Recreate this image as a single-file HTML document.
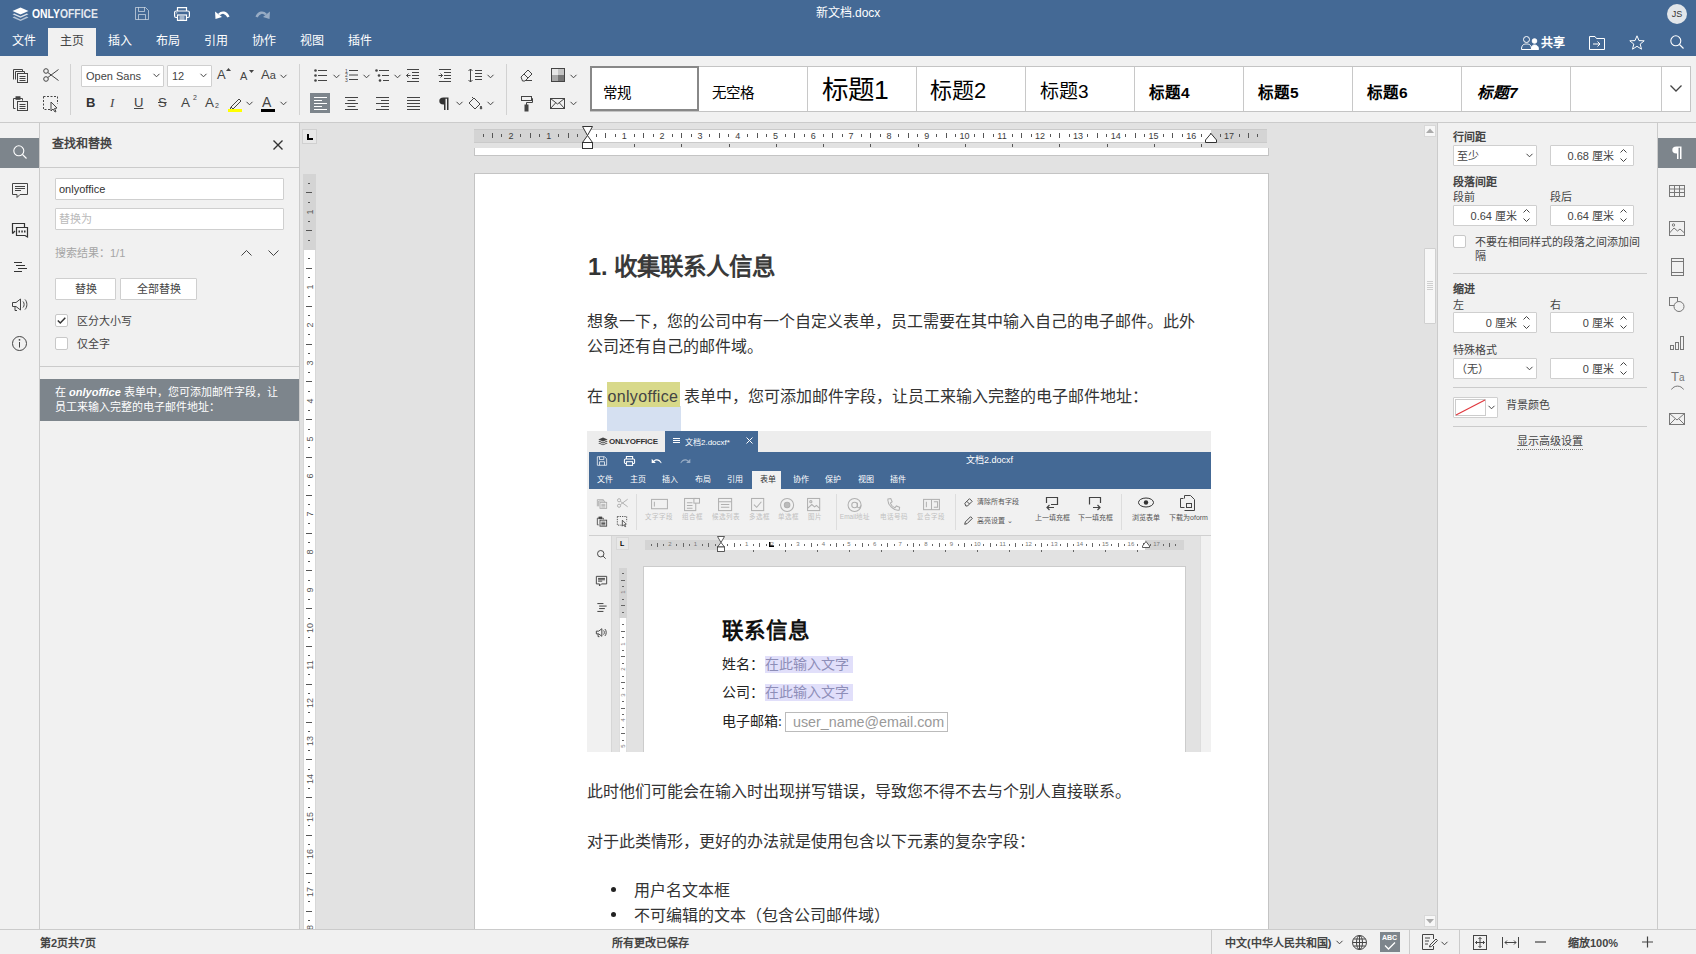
<!DOCTYPE html><html lang="zh-CN"><head><meta charset="utf-8"><style>
*{box-sizing:border-box;margin:0;padding:0}
html,body{width:1696px;height:954px;overflow:hidden}
body{position:relative;background:#f1f1f1;font-family:"Liberation Sans",sans-serif;color:#444;font-size:11px}
.a{position:absolute}
.w{color:#fff}
svg{position:absolute;overflow:visible}
.tab{position:absolute;top:28px;height:28px;width:48px;text-align:center;line-height:27px;font-size:12px;color:#fff}
.inp{position:absolute;background:#fff;border:1px solid #cfcfcf;border-radius:1px}
.btn{position:absolute;background:#fff;border:1px solid #cfcfcf;border-radius:1px;text-align:center;font-size:11px;color:#444}
.cb{position:absolute;width:13px;height:13px;background:#fff;border:1px solid #c8c8c8;border-radius:2px}
.sep{position:absolute;background:#d2d2d2}
.lbl{position:absolute;font-size:11px;color:#444;white-space:nowrap}
.b{font-weight:bold}
.gal{position:absolute;top:66px;height:45px;width:109px;background:#fff;border-right:1px solid #d8d8d8;white-space:nowrap;color:#000}
.doc{position:absolute;font-size:16px;color:#262626;white-space:nowrap;line-height:20px}
</style></head><body>
<div class="a" style="left:0;top:0;width:1696px;height:56px;background:#446995"></div>
<svg style="left:12px;top:7px" width="17" height="15" viewBox="0 0 17 15">
<path d="M8.5 0.5 L16.5 4 L8.5 7.5 L0.5 4 Z" fill="#fff"/>
<path d="M2.2 6.4 L8.5 9.2 L14.8 6.4 L16.5 7.2 L8.5 10.8 L0.5 7.2 Z" fill="#fff" opacity="0.8"/>
<path d="M2.2 9.6 L8.5 12.4 L14.8 9.6 L16.5 10.4 L8.5 14 L0.5 10.4 Z" fill="#fff" opacity="0.6"/>
</svg>
<div class="a w b" style="left:32px;top:6px;font-size:13.5px;letter-spacing:0px;line-height:16px;transform:scaleX(0.77);transform-origin:0 0">ONLY<span style="opacity:.85">OFFICE</span></div>
<svg style="left:135px;top:7px" width="14" height="13" viewBox="0 0 14 13" fill="none" stroke="#fff" stroke-opacity="0.55" stroke-width="1">
<path d="M0.5 0.5 H10.5 L13.5 3.5 V12.5 H0.5 Z"/><path d="M3.5 0.5 V4.5 H9.5 V0.5"/><path d="M3.5 12.5 V7.5 H10.5 V12.5"/></svg>
<svg style="left:174px;top:7px" width="16" height="14" viewBox="0 0 16 14" fill="none" stroke="#fff" stroke-width="1.2">
<path d="M3.5 4 V0.6 H12.5 V4"/><rect x="0.6" y="4" width="14.8" height="6.5" rx="1.5"/><rect x="3.5" y="8" width="9" height="5.4" fill="#446995"/><path d="M5.5 10 H10.5 M5.5 12 H10.5"/><circle cx="2.8" cy="5.8" r="0.6" fill="#fff" stroke="none"/></svg>
<svg style="left:214px;top:8px" width="16" height="12" viewBox="0 0 16 12">
<path d="M5 6.5 C8 3.5 12 4 14.5 9" fill="none" stroke="#fff" stroke-width="2.4"/><path d="M1 3.5 L1.5 11 L8 9 Z" fill="#fff"/></svg>
<svg style="left:255px;top:8px" width="16" height="12" viewBox="0 0 16 12" opacity="0.45">
<path d="M11 6.5 C8 3.5 4 4 1.5 9" fill="none" stroke="#fff" stroke-width="2.4"/><path d="M15 3.5 L14.5 11 L8 9 Z" fill="#fff"/></svg>
<div class="a w" style="left:748px;top:5px;width:200px;text-align:center;font-size:12px;line-height:16px">新文档.docx</div>
<div class="a" style="left:1667px;top:4px;width:20px;height:20px;border-radius:50%;background:#e2e6ea;color:#333;font-size:9px;line-height:20px;text-align:center">JS</div>
<div class="tab" style="left:0px">文件</div>
<div class="tab" style="left:48px;background:#f1f1f1;color:#444">主页</div>
<div class="tab" style="left:96px">插入</div>
<div class="tab" style="left:144px">布局</div>
<div class="tab" style="left:192px">引用</div>
<div class="tab" style="left:240px">协作</div>
<div class="tab" style="left:288px">视图</div>
<div class="tab" style="left:336px">插件</div>
<svg style="left:1521px;top:36px" width="19" height="14" viewBox="0 0 19 14" fill="none" stroke="#fff" stroke-width="1">
<circle cx="5.5" cy="3.5" r="3"/><path d="M0.5 13.5 C0.5 9 2.5 8 5.5 8 C8.5 8 10.5 9 10.5 13.5 Z"/>
<circle cx="13.5" cy="5" r="2.3" fill="#fff"/><path d="M10.5 13.5 C10.5 10 11.5 9 13.5 9 C15.5 9 17.5 10 17.5 13.5 Z" fill="#fff"/></svg>
<div class="a w b" style="left:1541px;top:36px;font-size:12px;line-height:14px">共享</div>
<svg style="left:1589px;top:36px" width="16" height="14" viewBox="0 0 16 14" fill="none" stroke="#fff" stroke-width="1">
<path d="M0.5 0.5 H6 L7.5 2.5 H15.5 V13.5 H0.5 Z"/><path d="M4 8 H11 M8.5 5.5 L11 8 L8.5 10.5"/></svg>
<svg style="left:1629px;top:35px" width="16" height="15" viewBox="0 0 16 15" fill="none" stroke="#fff" stroke-width="1">
<path d="M8 0.8 L10 5.6 L15.2 5.8 L11.2 9.1 L12.5 14.2 L8 11.3 L3.5 14.2 L4.8 9.1 L0.8 5.8 L6 5.6 Z"/></svg>
<svg style="left:1670px;top:35px" width="14" height="14" viewBox="0 0 14 14" fill="none" stroke="#fff" stroke-width="1.1">
<circle cx="5.8" cy="5.8" r="5"/><path d="M9.5 9.5 L13.5 13.5"/></svg>
<div class="a" style="left:0;top:122px;width:1696px;height:1px;background:#cbcbcb"></div>
<svg style="left:13px;top:69px" width="15" height="14" viewBox="0 0 15 14" fill="none" stroke="#444" stroke-width="1"><path d="M0.5 10.5 V0.5 H9.5 V2.5"/><path d="M2.5 10.5 V2.5 H11.5 V4.5"/><rect x="4.5" y="4.5" width="10" height="9"/><path d="M6.5 7.5 H12.5 M6.5 9.5 H12.5 M6.5 11.5 H12.5"/></svg>
<svg style="left:43px;top:68px" width="16" height="14" viewBox="0 0 16 14" fill="none" stroke="#444" stroke-width="1"><circle cx="3" cy="3" r="2.3"/><circle cx="3" cy="11" r="2.3"/><path d="M4.8 4.5 L15.5 12.5 M4.8 9.5 L15.5 1.5"/></svg>
<svg style="left:13px;top:96px" width="15" height="15" viewBox="0 0 15 15" fill="none" stroke="#444" stroke-width="1"><path d="M2.5 12.5 H0.5 V2.5 H9.5 V4.5"/><rect x="3" y="0.8" width="4" height="2.5" fill="#444"/><rect x="4.5" y="5.5" width="10" height="9"/><path d="M6.5 8.5 H12.5 M6.5 10.5 H12.5 M6.5 12.5 H12.5"/></svg>
<svg style="left:43px;top:96px" width="15" height="16" viewBox="0 0 15 16" fill="none" stroke="#444" stroke-width="1"><path d="M0.5 0.5 H14.5 V8 M0.5 0.5 V13.5 H7" stroke-dasharray="2 1.5"/><path d="M8 6 L8 15 L10 13 L12 16 L13 15.5 L11.5 12.5 L14 12 Z" fill="#f1f1f1"/></svg>
<div class="sep" style="left:70px;top:64px;width:1px;height:51px"></div>
<div class="sep" style="left:299px;top:64px;width:1px;height:51px"></div>
<div class="sep" style="left:506px;top:64px;width:1px;height:51px"></div>
<div class="inp" style="left:81px;top:65px;width:83px;height:22px"></div>
<div class="lbl" style="left:86px;top:69px;font-size:11px;line-height:14px">Open Sans</div>
<svg style="left:153px;top:73px" width="7" height="5" viewBox="0 0 7 5" fill="none" stroke="#444" stroke-width="1"><path d="M0.5 0.8 L3.5 3.8 L6.5 0.8"/></svg>
<div class="inp" style="left:167px;top:65px;width:45px;height:22px"></div>
<div class="lbl" style="left:172px;top:69px;font-size:11px;line-height:14px">12</div>
<svg style="left:200px;top:73px" width="7" height="5" viewBox="0 0 7 5" fill="none" stroke="#444" stroke-width="1"><path d="M0.5 0.8 L3.5 3.8 L6.5 0.8"/></svg>
<div class="lbl" style="left:217px;top:67px;font-size:13px;line-height:16px">A</div>
<svg style="left:226px;top:68px" width="5" height="3" viewBox="0 0 5 3" fill="none" stroke="#444" stroke-width="1"><path d="M0 3 L2.5 0 L5 3 Z" fill="#444" stroke="none"/></svg>
<div class="lbl" style="left:240px;top:69px;font-size:11px;line-height:14px">A</div>
<svg style="left:249px;top:70px" width="5" height="3" viewBox="0 0 5 3" fill="none" stroke="#444" stroke-width="1"><path d="M0 0 L2.5 3 L5 0 Z" fill="#444" stroke="none"/></svg>
<div class="lbl" style="left:261px;top:67px;font-size:13px;line-height:16px">A<span style="font-size:11px">a</span></div>
<svg style="left:280px;top:74px" width="7" height="5" viewBox="0 0 7 5" fill="none" stroke="#444" stroke-width="1"><path d="M0.5 0.8 L3.5 3.8 L6.5 0.8"/></svg>
<div class="lbl b" style="left:86px;top:95px;font-size:13px;line-height:16px;color:#333">B</div>
<div class="lbl" style="left:110px;top:95px;font-size:13px;line-height:16px;font-style:italic;font-family:'Liberation Serif',serif">I</div>
<div class="lbl" style="left:134px;top:95px;font-size:13px;line-height:16px;text-decoration:underline">U</div>
<div class="lbl" style="left:158px;top:95px;font-size:13px;line-height:16px;text-decoration:line-through">S</div>
<div class="lbl" style="left:181px;top:95px;font-size:13.5px;line-height:16px">A</div><div class="lbl" style="left:193px;top:94px;font-size:7px;line-height:8px">2</div>
<div class="lbl" style="left:205px;top:95px;font-size:13.5px;line-height:16px">A</div><div class="lbl" style="left:215px;top:102px;font-size:7px;line-height:8px">2</div>
<svg style="left:228px;top:96px" width="15" height="16" viewBox="0 0 15 16" fill="none" stroke="#444" stroke-width="1"><path d="M3 11 L11 3 L13 5 L5 13 Z M3 11 L2 14 L5 13"/><rect x="0" y="13" width="14" height="3" fill="#ffff00" stroke="none"/></svg>
<svg style="left:246px;top:101px" width="7" height="5" viewBox="0 0 7 5" fill="none" stroke="#444" stroke-width="1"><path d="M0.5 0.8 L3.5 3.8 L6.5 0.8"/></svg>
<div class="lbl" style="left:262px;top:94px;font-size:14px;line-height:16px">A</div>
<div class="a" style="left:261px;top:109px;width:14px;height:3px;background:#000"></div>
<svg style="left:280px;top:101px" width="7" height="5" viewBox="0 0 7 5" fill="none" stroke="#444" stroke-width="1"><path d="M0.5 0.8 L3.5 3.8 L6.5 0.8"/></svg>
<svg style="left:314px;top:69px" width="13" height="13" viewBox="0 0 13 13" fill="none" stroke="#444" stroke-width="1"><circle cx="1.5" cy="1.5" r="1.3" fill="#444" stroke="none"/><circle cx="1.5" cy="6.5" r="1.3" fill="#444" stroke="none"/><circle cx="1.5" cy="11.5" r="1.3" fill="#444" stroke="none"/><path d="M4 1.5 H13 M4 6.5 H13 M4 11.5 H13"/></svg>
<svg style="left:333px;top:74px" width="7" height="5" viewBox="0 0 7 5" fill="none" stroke="#444" stroke-width="1"><path d="M0.5 0.8 L3.5 3.8 L6.5 0.8"/></svg>
<svg style="left:345px;top:68px" width="13" height="14" viewBox="0 0 13 14" fill="none" stroke="#444" stroke-width="1"><text x="0" y="4.5" font-size="5" fill="#444" stroke="none" font-family="Liberation Sans">1</text><text x="0" y="9" font-size="5" fill="#444" stroke="none" font-family="Liberation Sans">2</text><text x="0" y="13.5" font-size="5" fill="#444" stroke="none" font-family="Liberation Sans">3</text><path d="M4 2.5 H13 M4 7 H13 M4 11.5 H13"/></svg>
<svg style="left:363px;top:74px" width="7" height="5" viewBox="0 0 7 5" fill="none" stroke="#444" stroke-width="1"><path d="M0.5 0.8 L3.5 3.8 L6.5 0.8"/></svg>
<svg style="left:375px;top:69px" width="14" height="13" viewBox="0 0 14 13" fill="none" stroke="#444" stroke-width="1"><circle cx="1.5" cy="1.5" r="1.3" fill="#444" stroke="none"/><circle cx="4" cy="6.5" r="1.3" fill="#444" stroke="none"/><circle cx="5" cy="11.5" r="1.3" fill="#444" stroke="none"/><path d="M4 1.5 H14 M7 6.5 H14 M8 11.5 H14"/></svg>
<svg style="left:394px;top:74px" width="7" height="5" viewBox="0 0 7 5" fill="none" stroke="#444" stroke-width="1"><path d="M0.5 0.8 L3.5 3.8 L6.5 0.8"/></svg>
<svg style="left:406px;top:69px" width="14" height="13" viewBox="0 0 14 13" fill="none" stroke="#444" stroke-width="1"><path d="M1 0.5 H13 M6 3.5 H13 M6 6.5 H13 M6 9.5 H13 M1 12.5 H13"/><path d="M4.5 6.5 H0.5 M2.5 4.5 L0.5 6.5 L2.5 8.5"/></svg>
<svg style="left:438px;top:69px" width="14" height="13" viewBox="0 0 14 13" fill="none" stroke="#444" stroke-width="1"><path d="M1 0.5 H13 M6 3.5 H13 M6 6.5 H13 M6 9.5 H13 M1 12.5 H13"/><path d="M0.5 6.5 H4.5 M2.5 4.5 L4.5 6.5 L2.5 8.5"/></svg>
<svg style="left:468px;top:68px" width="15" height="15" viewBox="0 0 15 15" fill="none" stroke="#444" stroke-width="1"><path d="M2.5 1 V14 M0.5 3 L2.5 1 L4.5 3 M0.5 12 L2.5 14 L4.5 12"/><path d="M7 2.5 H14 M7 5.5 H14 M7 8.5 H14 M7 11.5 H14"/></svg>
<svg style="left:487px;top:74px" width="7" height="5" viewBox="0 0 7 5" fill="none" stroke="#444" stroke-width="1"><path d="M0.5 0.8 L3.5 3.8 L6.5 0.8"/></svg>
<div class="a" style="left:310px;top:93px;width:20px;height:20px;background:#7d858c"></div>
<svg style="left:314px;top:97px" width="13" height="13" viewBox="0 0 13 13" fill="none" stroke="#fff" stroke-width="1"><path d="M0 0.5 H13 M0 3.5 H8 M0 6.5 H13 M0 9.5 H8 M0 12.5 H13"/></svg>
<svg style="left:345px;top:97px" width="13" height="13" viewBox="0 0 13 13" fill="none" stroke="#444" stroke-width="1"><path d="M0 0.5 H13 M2.5 3.5 H10.5 M0 6.5 H13 M2.5 9.5 H10.5 M0 12.5 H13"/></svg>
<svg style="left:376px;top:97px" width="13" height="13" viewBox="0 0 13 13" fill="none" stroke="#444" stroke-width="1"><path d="M0 0.5 H13 M5 3.5 H13 M0 6.5 H13 M5 9.5 H13 M0 12.5 H13"/></svg>
<svg style="left:407px;top:97px" width="13" height="13" viewBox="0 0 13 13" fill="none" stroke="#444" stroke-width="1"><path d="M0 0.5 H13 M0 3.5 H13 M0 6.5 H13 M0 9.5 H13 M0 12.5 H13"/></svg>
<svg style="left:439px;top:97px" width="10" height="13" viewBox="0 0 10 13" fill="none" stroke="#444" stroke-width="1"><path d="M4.5 0.5 H9.5 V13 H8 V1.8 H6.5 V13 H5 V7.5 H4.5 C1.5 7.5 0.3 6 0.3 4 C0.3 2 1.5 0.5 4.5 0.5 Z" fill="#333" stroke="none"/></svg>
<svg style="left:456px;top:101px" width="7" height="5" viewBox="0 0 7 5" fill="none" stroke="#444" stroke-width="1"><path d="M0.5 0.8 L3.5 3.8 L6.5 0.8"/></svg>
<svg style="left:468px;top:96px" width="15" height="15" viewBox="0 0 15 15" fill="none" stroke="#444" stroke-width="1"><path d="M1 7 L6 2 L12 8 L7 13 Z"/><path d="M4 1 L6 3"/><path d="M13 10 C12 12 12 13 13 13 C14 13 14 12 13 10Z" fill="#444"/></svg>
<svg style="left:487px;top:101px" width="7" height="5" viewBox="0 0 7 5" fill="none" stroke="#444" stroke-width="1"><path d="M0.5 0.8 L3.5 3.8 L6.5 0.8"/></svg>
<svg style="left:520px;top:69px" width="13" height="12" viewBox="0 0 13 12" fill="none" stroke="#444" stroke-width="1"><path d="M1 8 L8 1 L12 5 L5 12 H2.5 Z M4 5 L8 9"/><path d="M5 11.5 H12"/></svg>
<svg style="left:551px;top:68px" width="14" height="14" viewBox="0 0 14 14" fill="none" stroke="#444" stroke-width="1"><rect x="1" y="1" width="6" height="6" fill="#e6e6e6" stroke="none"/><rect x="7" y="1" width="6" height="6" fill="#c4c4c4" stroke="none"/><rect x="1" y="7" width="6" height="6" fill="#a8a8a8" stroke="none"/><rect x="7" y="7" width="6" height="6" fill="#767676" stroke="none"/><rect x="0.5" y="0.5" width="13" height="13"/></svg>
<svg style="left:570px;top:74px" width="7" height="5" viewBox="0 0 7 5" fill="none" stroke="#444" stroke-width="1"><path d="M0.5 0.8 L3.5 3.8 L6.5 0.8"/></svg>
<svg style="left:520px;top:96px" width="13" height="15" viewBox="0 0 13 15" fill="none" stroke="#444" stroke-width="1"><rect x="1.5" y="0.5" width="10" height="4"/><path d="M11.5 2.5 H12.5 V6.5 H6.5 V9"/><rect x="5" y="9" width="3" height="6" fill="#444"/></svg>
<svg style="left:550px;top:98px" width="15" height="11" viewBox="0 0 15 11" fill="none" stroke="#444" stroke-width="1"><rect x="0.5" y="0.5" width="14" height="10"/><path d="M0.5 0.5 L7.5 6 L14.5 0.5 M0.5 10.5 L5.5 5 M14.5 10.5 L9.5 5"/></svg>
<svg style="left:570px;top:101px" width="7" height="5" viewBox="0 0 7 5" fill="none" stroke="#444" stroke-width="1"><path d="M0.5 0.8 L3.5 3.8 L6.5 0.8"/></svg>
<div class="a" style="left:590px;top:66px;width:1101px;height:46px;background:#fff;border:1px solid #c4c4c4"></div>
<div class="a" style="left:698px;top:67px;width:1px;height:44px;background:#c8c8c8"></div>
<div class="a" style="left:603px;top:67px;height:43px;line-height:52px;color:#000;white-space:nowrap;font-size:14.5px;">常规</div>
<div class="a" style="left:807px;top:67px;width:1px;height:44px;background:#c8c8c8"></div>
<div class="a" style="left:712px;top:67px;height:43px;line-height:52px;color:#000;white-space:nowrap;font-size:14.5px;">无空格</div>
<div class="a" style="left:916px;top:67px;width:1px;height:44px;background:#c8c8c8"></div>
<div class="a" style="left:822px;top:67px;height:43px;line-height:52px;color:#000;white-space:nowrap;font-size:26.5px;line-height:46px;">标题1</div>
<div class="a" style="left:1025px;top:67px;width:1px;height:44px;background:#c8c8c8"></div>
<div class="a" style="left:930px;top:67px;height:43px;line-height:52px;color:#000;white-space:nowrap;font-size:22px;line-height:48px;">标题2</div>
<div class="a" style="left:1134px;top:67px;width:1px;height:44px;background:#c8c8c8"></div>
<div class="a" style="left:1040px;top:67px;height:43px;line-height:52px;color:#000;white-space:nowrap;font-size:19px;line-height:49px;">标题3</div>
<div class="a" style="left:1243px;top:67px;width:1px;height:44px;background:#c8c8c8"></div>
<div class="a" style="left:1149px;top:67px;height:43px;line-height:52px;color:#000;white-space:nowrap;font-size:15.5px;font-weight:bold;">标题4</div>
<div class="a" style="left:1352px;top:67px;width:1px;height:44px;background:#c8c8c8"></div>
<div class="a" style="left:1258px;top:67px;height:43px;line-height:52px;color:#000;white-space:nowrap;font-size:15.5px;font-weight:bold;">标题5</div>
<div class="a" style="left:1461px;top:67px;width:1px;height:44px;background:#c8c8c8"></div>
<div class="a" style="left:1367px;top:67px;height:43px;line-height:52px;color:#000;white-space:nowrap;font-size:15.5px;font-weight:bold;">标题6</div>
<div class="a" style="left:1570px;top:67px;width:1px;height:44px;background:#c8c8c8"></div>
<div class="a" style="left:1477px;top:67px;height:43px;line-height:52px;color:#000;white-space:nowrap;font-size:15.5px;font-weight:bold;font-style:italic;">标题7</div>
<div class="a" style="left:1661px;top:67px;width:1px;height:44px;background:#c8c8c8"></div>
<div class="a" style="left:590px;top:66px;width:109px;height:45px;border:2px solid #888"></div>
<svg style="left:1670px;top:85px" width="12" height="7" viewBox="0 0 12 7" fill="none" stroke="#444" stroke-width="1.3"><path d="M0.5 0.5 L6 6 L11.5 0.5"/></svg>
<div class="a" style="left:39px;top:123px;width:1px;height:806px;background:#cbcbcb"></div>
<div class="a" style="left:0;top:138px;width:39px;height:30px;background:#7d858c"></div>
<svg style="left:13px;top:145px" width="14" height="14" viewBox="0 0 14 14" fill="none" stroke="#fff" stroke-width="1.1"><circle cx="5.8" cy="5.8" r="5"/><path d="M9.5 9.5 L13.5 13.5"/></svg>
<svg style="left:12px;top:183px" width="16" height="16" viewBox="0 0 16 16" fill="none" stroke="#444" stroke-width="1"><path d="M0.5 0.5 H15.5 V11.5 H8 L5 14.5 V11.5 H0.5 Z"/><path d="M3 3.5 H13 M3 5.5 H13 M3 7.5 H9"/></svg>
<svg style="left:12px;top:223px" width="17" height="15" viewBox="0 0 17 15" fill="none" stroke="#333" stroke-width="1.2"><path d="M0.5 10.5 V0.5 H12.5 V4"/><path d="M0.5 10.5 L3 8"/><path d="M4.5 4.5 H15.5 V14 L13 12.5 H4.5 Z"/><path d="M6.5 8.5 H8 M9.3 8.5 H10.8 M12 8.5 H13.5" stroke-width="2"/></svg>
<svg style="left:13px;top:261px" width="15" height="12" viewBox="0 0 15 12" fill="none" stroke="#333" stroke-width="1.1"><path d="M1 1.5 H9 M3 4.5 H12 M5 7.5 H14 M1 10.5 H9"/></svg>
<svg style="left:12px;top:298px" width="16" height="13" viewBox="0 0 16 13" fill="none" stroke="#444" stroke-width="1"><path d="M0.5 4.5 H4 L8.5 1 V12 L4 8.5 H0.5 Z"/><path d="M3 8.5 V12.5 H5"/><path d="M11 3.5 C12.5 5 12.5 8 11 9.5 M13 1.5 C15.5 4 15.5 9 13 11.5"/></svg>
<svg style="left:12px;top:336px" width="15" height="15" viewBox="0 0 15 15" fill="none" stroke="#444" stroke-width="1"><circle cx="7.5" cy="7.5" r="7"/><path d="M7.5 6 V11.5"/><circle cx="7.5" cy="3.8" r="0.9" fill="#444" stroke="none"/></svg>
<div class="a" style="left:299px;top:123px;width:1px;height:806px;background:#cbcbcb"></div>
<div class="a" style="left:40px;top:167px;width:259px;height:1px;background:#cbcbcb"></div>
<div class="lbl b" style="left:52px;top:137px;font-size:12px;line-height:15px;color:#444">查找和替换</div>
<svg style="left:273px;top:140px" width="10" height="10" viewBox="0 0 10 10" fill="none" stroke="#333" stroke-width="1.4"><path d="M0.5 0.5 L9.5 9.5 M9.5 0.5 L0.5 9.5"/></svg>
<div class="inp" style="left:55px;top:178px;width:229px;height:22px"></div>
<div class="lbl" style="left:59px;top:182px;font-size:11px;line-height:14px;color:#333">onlyoffice</div>
<div class="inp" style="left:55px;top:208px;width:229px;height:22px"></div>
<div class="lbl" style="left:59px;top:212px;font-size:11px;line-height:14px;color:#b9b9b9">替换为</div>
<div class="lbl" style="left:55px;top:246px;font-size:11px;line-height:14px;color:#a5a5a5">搜索结果：1/1</div>
<svg style="left:241px;top:250px" width="11" height="6" viewBox="0 0 11 6" fill="none" stroke="#444" stroke-width="1"><path d="M0.5 5.5 L5.5 0.5 L10.5 5.5"/></svg>
<svg style="left:268px;top:250px" width="11" height="6" viewBox="0 0 11 6" fill="none" stroke="#444" stroke-width="1"><path d="M0.5 0.5 L5.5 5.5 L10.5 0.5"/></svg>
<div class="btn" style="left:55px;top:278px;width:61px;height:22px;line-height:20px">替换</div>
<div class="btn" style="left:120px;top:278px;width:77px;height:22px;line-height:20px">全部替换</div>
<div class="cb" style="left:55px;top:314px"></div>
<svg style="left:57px;top:317px" width="9" height="7" viewBox="0 0 9 7" fill="none" stroke="#333" stroke-width="1.5"><path d="M0.8 3.5 L3.3 6 L8.3 0.8"/></svg>
<div class="lbl" style="left:77px;top:314px;font-size:11px;line-height:14px">区分大小写</div>
<div class="cb" style="left:55px;top:337px"></div>
<div class="lbl" style="left:77px;top:337px;font-size:11px;line-height:14px">仅全字</div>
<div class="a" style="left:40px;top:366px;width:259px;height:1px;background:#cbcbcb"></div>
<div class="a" style="left:40px;top:379px;width:259px;height:42px;background:#7d858c"></div>
<div class="lbl" style="left:55px;top:385px;font-size:11px;line-height:15px;color:#fff;white-space:normal;width:235px">在 <b><i>onlyoffice</i></b> 表单中，您可添加邮件字段，让<br>员工来输入完整的电子邮件地址：</div>
<div class="a" style="left:0;top:929px;width:1696px;height:1px;background:#cbcbcb"></div>
<div class="lbl b" style="left:40px;top:936px;font-size:11px;line-height:14px">第2页共7页</div>
<div class="lbl b" style="left:612px;top:936px;font-size:11px;line-height:14px">所有更改已保存</div>
<div class="sep" style="left:1211px;top:930px;width:1px;height:24px;background:#cbcbcb"></div>
<div class="lbl b" style="left:1225px;top:936px;font-size:11px;line-height:14px">中文(中华人民共和国)</div>
<svg style="left:1336px;top:940px" width="7" height="5" viewBox="0 0 7 5" fill="none" stroke="#444" stroke-width="1"><path d="M0.5 0.8 L3.5 3.8 L6.5 0.8"/></svg>
<svg style="left:1352px;top:935px" width="15" height="15" viewBox="0 0 15 15" fill="none" stroke="#444" stroke-width="1"><circle cx="7.5" cy="7.5" r="7"/><ellipse cx="7.5" cy="7.5" rx="3" ry="7"/><path d="M0.5 7.5 H14.5 M1.5 4 H13.5 M1.5 11 H13.5 M7.5 0.5 V14.5"/></svg>
<div class="a" style="left:1380px;top:932px;width:20px;height:20px;background:#7d858c"></div>
<div class="a b" style="left:1382px;top:934px;font-size:7px;line-height:8px;color:#fff">ABC</div>
<svg style="left:1384px;top:942px" width="12" height="8" viewBox="0 0 12 8" fill="none" stroke="#fff" stroke-width="1.3"><path d="M1 3.5 L4.5 7 L11 0.5"/></svg>
<div class="sep" style="left:1409px;top:930px;width:1px;height:24px;background:#cbcbcb"></div>
<svg style="left:1422px;top:934px" width="16" height="16" viewBox="0 0 16 16" fill="none" stroke="#444" stroke-width="1"><path d="M11.5 5 V0.5 H0.5 V15.5 H11.5 V12"/><path d="M3 4 H8 M3 7 H7 M3 10 H6"/><path d="M8 11 L14 5 L15.5 6.5 L9.5 12.5 L7.5 13 Z"/></svg>
<svg style="left:1441px;top:941px" width="7" height="5" viewBox="0 0 7 5" fill="none" stroke="#444" stroke-width="1"><path d="M0.5 0.8 L3.5 3.8 L6.5 0.8"/></svg>
<div class="sep" style="left:1459px;top:930px;width:1px;height:24px;background:#cbcbcb"></div>
<svg style="left:1473px;top:935px" width="14" height="15" viewBox="0 0 14 15" fill="none" stroke="#444" stroke-width="1"><rect x="0.5" y="0.5" width="13" height="14"/><path d="M7 2.5 V12.5 M2.5 7.5 H11.5 M5.5 4 L7 2.5 L8.5 4 M5.5 11 L7 12.5 L8.5 11 M4 6 L2.5 7.5 L4 9 M10 6 L11.5 7.5 L10 9"/></svg>
<svg style="left:1502px;top:937px" width="17" height="11" viewBox="0 0 17 11" fill="none" stroke="#444" stroke-width="1"><path d="M0.5 0 V11 M16.5 0 V11 M3 5.5 H14 M5 3.5 L3 5.5 L5 7.5 M12 3.5 L14 5.5 L12 7.5"/></svg>
<svg style="left:1535px;top:941px" width="11" height="2" viewBox="0 0 11 2" fill="none" stroke="#444" stroke-width="1.2"><path d="M0 1 H11"/></svg>
<div class="lbl b" style="left:1568px;top:936px;font-size:11px;line-height:14px">缩放100%</div>
<svg style="left:1642px;top:935px" width="11" height="14" viewBox="0 0 11 14" fill="none" stroke="#444" stroke-width="1.2"><path d="M0 7 H11 M5.5 1.5 V12.5"/></svg>
<div class="a" style="left:1437px;top:123px;width:1px;height:806px;background:#cbcbcb"></div>
<div class="a" style="left:1657px;top:123px;width:1px;height:806px;background:#cbcbcb"></div>
<div class="lbl b" style="left:1453px;top:130px;font-size:11px;line-height:14px">行间距</div>
<div class="inp" style="left:1453px;top:145px;width:84px;height:21px"></div>
<div class="lbl" style="left:1457px;top:149px;font-size:11px;line-height:14px;color:#444">至少</div>
<svg style="left:1526px;top:153px" width="7" height="5" viewBox="0 0 7 5" fill="none" stroke="#444" stroke-width="1"><path d="M0.5 0.8 L3.5 3.8 L6.5 0.8"/></svg>
<div class="inp" style="left:1550px;top:145px;width:84px;height:21px"></div>
<div class="lbl" style="left:1550px;top:149px;width:64px;text-align:right;font-size:11px;line-height:14px;color:#444">0.68 厘米</div>
<svg style="left:1620px;top:149px" width="7" height="4" viewBox="0 0 7 4" fill="none" stroke="#444" stroke-width="1"><path d="M0.5 3.5 L3.5 0.5 L6.5 3.5"/></svg>
<svg style="left:1620px;top:158px" width="7" height="4" viewBox="0 0 7 4" fill="none" stroke="#444" stroke-width="1"><path d="M0.5 0.5 L3.5 3.5 L6.5 0.5"/></svg>
<div class="lbl b" style="left:1453px;top:175px;font-size:11px;line-height:14px">段落间距</div>
<div class="lbl" style="left:1453px;top:190px;font-size:11px;line-height:14px">段前</div>
<div class="lbl" style="left:1550px;top:190px;font-size:11px;line-height:14px">段后</div>
<div class="inp" style="left:1453px;top:205px;width:84px;height:21px"></div>
<div class="lbl" style="left:1453px;top:209px;width:64px;text-align:right;font-size:11px;line-height:14px;color:#444">0.64 厘米</div>
<svg style="left:1523px;top:209px" width="7" height="4" viewBox="0 0 7 4" fill="none" stroke="#444" stroke-width="1"><path d="M0.5 3.5 L3.5 0.5 L6.5 3.5"/></svg>
<svg style="left:1523px;top:218px" width="7" height="4" viewBox="0 0 7 4" fill="none" stroke="#444" stroke-width="1"><path d="M0.5 0.5 L3.5 3.5 L6.5 0.5"/></svg>
<div class="inp" style="left:1550px;top:205px;width:84px;height:21px"></div>
<div class="lbl" style="left:1550px;top:209px;width:64px;text-align:right;font-size:11px;line-height:14px;color:#444">0.64 厘米</div>
<svg style="left:1620px;top:209px" width="7" height="4" viewBox="0 0 7 4" fill="none" stroke="#444" stroke-width="1"><path d="M0.5 3.5 L3.5 0.5 L6.5 3.5"/></svg>
<svg style="left:1620px;top:218px" width="7" height="4" viewBox="0 0 7 4" fill="none" stroke="#444" stroke-width="1"><path d="M0.5 0.5 L3.5 3.5 L6.5 0.5"/></svg>
<div class="cb" style="left:1453px;top:235px"></div>
<div class="lbl" style="left:1475px;top:235px;font-size:11px;line-height:14px;white-space:normal;width:175px">不要在相同样式的段落之间添加间<br>隔</div>
<div class="a" style="left:1453px;top:273px;width:194px;height:1px;background:#cbcbcb"></div>
<div class="lbl b" style="left:1453px;top:282px;font-size:11px;line-height:14px">缩进</div>
<div class="lbl" style="left:1453px;top:298px;font-size:11px;line-height:14px">左</div>
<div class="lbl" style="left:1550px;top:298px;font-size:11px;line-height:14px">右</div>
<div class="inp" style="left:1453px;top:312px;width:84px;height:21px"></div>
<div class="lbl" style="left:1453px;top:316px;width:64px;text-align:right;font-size:11px;line-height:14px;color:#444">0 厘米</div>
<svg style="left:1523px;top:316px" width="7" height="4" viewBox="0 0 7 4" fill="none" stroke="#444" stroke-width="1"><path d="M0.5 3.5 L3.5 0.5 L6.5 3.5"/></svg>
<svg style="left:1523px;top:325px" width="7" height="4" viewBox="0 0 7 4" fill="none" stroke="#444" stroke-width="1"><path d="M0.5 0.5 L3.5 3.5 L6.5 0.5"/></svg>
<div class="inp" style="left:1550px;top:312px;width:84px;height:21px"></div>
<div class="lbl" style="left:1550px;top:316px;width:64px;text-align:right;font-size:11px;line-height:14px;color:#444">0 厘米</div>
<svg style="left:1620px;top:316px" width="7" height="4" viewBox="0 0 7 4" fill="none" stroke="#444" stroke-width="1"><path d="M0.5 3.5 L3.5 0.5 L6.5 3.5"/></svg>
<svg style="left:1620px;top:325px" width="7" height="4" viewBox="0 0 7 4" fill="none" stroke="#444" stroke-width="1"><path d="M0.5 0.5 L3.5 3.5 L6.5 0.5"/></svg>
<div class="lbl" style="left:1453px;top:343px;font-size:11px;line-height:14px">特殊格式</div>
<div class="inp" style="left:1453px;top:358px;width:84px;height:21px"></div>
<div class="lbl" style="left:1456px;top:362px;font-size:11px;line-height:14px;color:#444">（无）</div>
<svg style="left:1526px;top:366px" width="7" height="5" viewBox="0 0 7 5" fill="none" stroke="#444" stroke-width="1"><path d="M0.5 0.8 L3.5 3.8 L6.5 0.8"/></svg>
<div class="inp" style="left:1550px;top:358px;width:84px;height:21px"></div>
<div class="lbl" style="left:1550px;top:362px;width:64px;text-align:right;font-size:11px;line-height:14px;color:#444">0 厘米</div>
<svg style="left:1620px;top:362px" width="7" height="4" viewBox="0 0 7 4" fill="none" stroke="#444" stroke-width="1"><path d="M0.5 3.5 L3.5 0.5 L6.5 3.5"/></svg>
<svg style="left:1620px;top:371px" width="7" height="4" viewBox="0 0 7 4" fill="none" stroke="#444" stroke-width="1"><path d="M0.5 0.5 L3.5 3.5 L6.5 0.5"/></svg>
<div class="a" style="left:1453px;top:387px;width:194px;height:1px;background:#cbcbcb"></div>
<div class="inp" style="left:1453px;top:397px;width:45px;height:21px"></div>
<svg style="left:1455px;top:399px" width="31" height="17" viewBox="0 0 31 17" fill="none"><rect x="0.5" y="0.5" width="30" height="16" fill="#fff" stroke="#ccc"/><path d="M1 16 L30 1" stroke="#e0383e" stroke-width="1.2"/></svg>
<svg style="left:1488px;top:405px" width="7" height="5" viewBox="0 0 7 5" fill="none" stroke="#444" stroke-width="1"><path d="M0.5 0.8 L3.5 3.8 L6.5 0.8"/></svg>
<div class="lbl" style="left:1506px;top:398px;font-size:11px;line-height:14px">背景颜色</div>
<div class="a" style="left:1453px;top:426px;width:194px;height:1px;background:#cbcbcb"></div>
<div class="lbl" style="left:1517px;top:434px;font-size:11px;line-height:14px;border-bottom:1px dotted #777;line-height:15px">显示高级设置</div>
<div class="a" style="left:1658px;top:138px;width:38px;height:30px;background:#7d858c"></div>
<svg style="left:1672px;top:146px" width="10" height="13" viewBox="0 0 10 13" fill="none" stroke="#444" stroke-width="1"><path d="M4.5 0.5 H9.5 V13 H8 V1.8 H6.5 V13 H5 V7.5 H4.5 C1.5 7.5 0.3 6 0.3 4 C0.3 2 1.5 0.5 4.5 0.5 Z" fill="#fff" stroke="none"/></svg>
<svg style="left:1669px;top:185px" width="16" height="12" viewBox="0 0 16 12" fill="none" stroke="#777" stroke-width="1"><rect x="0.5" y="0.5" width="15" height="11"/><path d="M0.5 4 H15.5 M0.5 7.5 H15.5 M5.5 0.5 V11.5 M10.5 0.5 V11.5"/></svg>
<svg style="left:1669px;top:221px" width="16" height="15" viewBox="0 0 16 15" fill="none" stroke="#777" stroke-width="1"><rect x="0.5" y="0.5" width="15" height="14"/><path d="M0.5 12 L5 7 L8.5 10 L11 8 L15.5 12"/><circle cx="4.5" cy="4" r="1.2"/></svg>
<svg style="left:1671px;top:258px" width="13" height="18" viewBox="0 0 13 18" fill="none" stroke="#777" stroke-width="1"><rect x="0.5" y="0.5" width="12" height="17"/><path d="M0.5 3.5 H12.5 M0.5 14.5 H12.5"/></svg>
<svg style="left:1669px;top:297px" width="16" height="15" viewBox="0 0 16 15" fill="none" stroke="#777" stroke-width="1"><rect x="0.5" y="0.5" width="8" height="8"/><circle cx="10" cy="9.5" r="5" fill="#f1f1f1"/></svg>
<svg style="left:1670px;top:336px" width="15" height="14" viewBox="0 0 15 14" fill="none" stroke="#777" stroke-width="1"><rect x="0.5" y="9.5" width="3" height="4"/><rect x="5.5" y="6.5" width="3" height="7"/><rect x="10.5" y="0.5" width="3" height="13"/></svg>
<div class="a" style="left:1671px;top:370px;font-size:13px;line-height:14px;color:#777">T<span style="font-size:10px">a</span></div>
<svg style="left:1671px;top:385px" width="13" height="5" viewBox="0 0 13 5" fill="none" stroke="#777" stroke-width="1"><path d="M0.5 4.5 C3 0 10 0 12.5 4.5"/></svg>
<svg style="left:1669px;top:413px" width="16" height="12" viewBox="0 0 16 12" fill="none" stroke="#777" stroke-width="1"><rect x="0.5" y="0.5" width="15" height="11"/><path d="M0.5 0.5 L8 7 L15.5 0.5 M0.5 11.5 L6 6 M15.5 11.5 L10 6"/></svg>
<div class="a" style="left:300px;top:123px;width:1137px;height:806px;background:#e2e2e2;overflow:hidden">
<div class="a" style="left:174px;top:25px;width:795px;height:8px;background:#fff;border:1px solid #c4c4c4;border-top:none"></div>
<div class="a" style="left:174px;top:50px;width:795px;height:760px;background:#fff;border:1px solid #c4c4c4;border-bottom:none"></div>
<div class="a" style="left:2px;top:6px;width:15px;height:15px;background:#e8e8e8;border:1px solid #d0d0d0"></div>
<svg style="left:7px;top:11px" width="6" height="6" viewBox="0 0 6 6"><path d="M0 0 H2 V4 H6 V6 H0 Z" fill="#000"/></svg>
<div class="a" style="left:174px;top:6px;width:793px;height:14px;background:#d4d4d4;border-top:1px solid #cacaca;border-bottom:1px solid #cacaca"></div>
<div class="a" style="left:287px;top:7px;width:624px;height:12px;background:#fff"></div>
<div class="a" style="left:208.39999999999998px;top:7px;white-space:nowrap;font-size:9px;line-height:12px;color:#3c3c3c">2</div>
<div class="a" style="left:246.20000000000005px;top:7px;white-space:nowrap;font-size:9px;line-height:12px;color:#3c3c3c">1</div>
<div class="a" style="left:321.79999999999995px;top:7px;white-space:nowrap;font-size:9px;line-height:12px;color:#3c3c3c">1</div>
<div class="a" style="left:359.6px;top:7px;white-space:nowrap;font-size:9px;line-height:12px;color:#3c3c3c">2</div>
<div class="a" style="left:397.4px;top:7px;white-space:nowrap;font-size:9px;line-height:12px;color:#3c3c3c">3</div>
<div class="a" style="left:435.20000000000005px;top:7px;white-space:nowrap;font-size:9px;line-height:12px;color:#3c3c3c">4</div>
<div class="a" style="left:473.0px;top:7px;white-space:nowrap;font-size:9px;line-height:12px;color:#3c3c3c">5</div>
<div class="a" style="left:510.79999999999995px;top:7px;white-space:nowrap;font-size:9px;line-height:12px;color:#3c3c3c">6</div>
<div class="a" style="left:548.5999999999999px;top:7px;white-space:nowrap;font-size:9px;line-height:12px;color:#3c3c3c">7</div>
<div class="a" style="left:586.4px;top:7px;white-space:nowrap;font-size:9px;line-height:12px;color:#3c3c3c">8</div>
<div class="a" style="left:624.2px;top:7px;white-space:nowrap;font-size:9px;line-height:12px;color:#3c3c3c">9</div>
<div class="a" style="left:659.5px;top:7px;white-space:nowrap;font-size:9px;line-height:12px;color:#3c3c3c">10</div>
<div class="a" style="left:697.3px;top:7px;white-space:nowrap;font-size:9px;line-height:12px;color:#3c3c3c">11</div>
<div class="a" style="left:735.0999999999999px;top:7px;white-space:nowrap;font-size:9px;line-height:12px;color:#3c3c3c">12</div>
<div class="a" style="left:772.9000000000001px;top:7px;white-space:nowrap;font-size:9px;line-height:12px;color:#3c3c3c">13</div>
<div class="a" style="left:810.6999999999998px;top:7px;white-space:nowrap;font-size:9px;line-height:12px;color:#3c3c3c">14</div>
<div class="a" style="left:848.5px;top:7px;white-space:nowrap;font-size:9px;line-height:12px;color:#3c3c3c">15</div>
<div class="a" style="left:886.3px;top:7px;white-space:nowrap;font-size:9px;line-height:12px;color:#3c3c3c">16</div>
<div class="a" style="left:924.0999999999999px;top:7px;white-space:nowrap;font-size:9px;line-height:12px;color:#3c3c3c">17</div>
<div class="a" style="left:182.6px;top:11px;width:1px;height:3px;background:#555"></div><div class="a" style="left:192.0px;top:10px;width:1px;height:5px;background:#555"></div><div class="a" style="left:201.4px;top:11px;width:1px;height:3px;background:#555"></div><div class="a" style="left:220.4px;top:11px;width:1px;height:3px;background:#555"></div><div class="a" style="left:229.8px;top:10px;width:1px;height:5px;background:#555"></div><div class="a" style="left:239.2px;top:11px;width:1px;height:3px;background:#555"></div><div class="a" style="left:258.1px;top:11px;width:1px;height:3px;background:#555"></div><div class="a" style="left:267.6px;top:10px;width:1px;height:5px;background:#555"></div><div class="a" style="left:277.0px;top:11px;width:1px;height:3px;background:#555"></div><div class="a" style="left:296.0px;top:11px;width:1px;height:3px;background:#555"></div><div class="a" style="left:305.4px;top:10px;width:1px;height:5px;background:#555"></div><div class="a" style="left:314.9px;top:11px;width:1px;height:3px;background:#555"></div><div class="a" style="left:333.8px;top:11px;width:1px;height:3px;background:#555"></div><div class="a" style="left:343.2px;top:10px;width:1px;height:5px;background:#555"></div><div class="a" style="left:352.6px;top:11px;width:1px;height:3px;background:#555"></div><div class="a" style="left:371.5px;top:11px;width:1px;height:3px;background:#555"></div><div class="a" style="left:381.0px;top:10px;width:1px;height:5px;background:#555"></div><div class="a" style="left:390.5px;top:11px;width:1px;height:3px;background:#555"></div><div class="a" style="left:409.4px;top:11px;width:1px;height:3px;background:#555"></div><div class="a" style="left:418.8px;top:10px;width:1px;height:5px;background:#555"></div><div class="a" style="left:428.2px;top:11px;width:1px;height:3px;background:#555"></div><div class="a" style="left:447.1px;top:11px;width:1px;height:3px;background:#555"></div><div class="a" style="left:456.6px;top:10px;width:1px;height:5px;background:#555"></div><div class="a" style="left:466.0px;top:11px;width:1px;height:3px;background:#555"></div><div class="a" style="left:485.0px;top:11px;width:1px;height:3px;background:#555"></div><div class="a" style="left:494.4px;top:10px;width:1px;height:5px;background:#555"></div><div class="a" style="left:503.9px;top:11px;width:1px;height:3px;background:#555"></div><div class="a" style="left:522.8px;top:11px;width:1px;height:3px;background:#555"></div><div class="a" style="left:532.2px;top:10px;width:1px;height:5px;background:#555"></div><div class="a" style="left:541.6px;top:11px;width:1px;height:3px;background:#555"></div><div class="a" style="left:560.5px;top:11px;width:1px;height:3px;background:#555"></div><div class="a" style="left:570.0px;top:10px;width:1px;height:5px;background:#555"></div><div class="a" style="left:579.5px;top:11px;width:1px;height:3px;background:#555"></div><div class="a" style="left:598.3px;top:11px;width:1px;height:3px;background:#555"></div><div class="a" style="left:607.8px;top:10px;width:1px;height:5px;background:#555"></div><div class="a" style="left:617.2px;top:11px;width:1px;height:3px;background:#555"></div><div class="a" style="left:636.1px;top:11px;width:1px;height:3px;background:#555"></div><div class="a" style="left:645.6px;top:10px;width:1px;height:5px;background:#555"></div><div class="a" style="left:655.0px;top:11px;width:1px;height:3px;background:#555"></div><div class="a" style="left:674.0px;top:11px;width:1px;height:3px;background:#555"></div><div class="a" style="left:683.4px;top:10px;width:1px;height:5px;background:#555"></div><div class="a" style="left:692.8px;top:11px;width:1px;height:3px;background:#555"></div><div class="a" style="left:711.8px;top:11px;width:1px;height:3px;background:#555"></div><div class="a" style="left:721.2px;top:10px;width:1px;height:5px;background:#555"></div><div class="a" style="left:730.7px;top:11px;width:1px;height:3px;background:#555"></div><div class="a" style="left:749.5px;top:11px;width:1px;height:3px;background:#555"></div><div class="a" style="left:759.0px;top:10px;width:1px;height:5px;background:#555"></div><div class="a" style="left:768.5px;top:11px;width:1px;height:3px;background:#555"></div><div class="a" style="left:787.3px;top:11px;width:1px;height:3px;background:#555"></div><div class="a" style="left:796.8px;top:10px;width:1px;height:5px;background:#555"></div><div class="a" style="left:806.2px;top:11px;width:1px;height:3px;background:#555"></div><div class="a" style="left:825.2px;top:11px;width:1px;height:3px;background:#555"></div><div class="a" style="left:834.6px;top:10px;width:1px;height:5px;background:#555"></div><div class="a" style="left:844.0px;top:11px;width:1px;height:3px;background:#555"></div><div class="a" style="left:862.9px;top:11px;width:1px;height:3px;background:#555"></div><div class="a" style="left:872.4px;top:10px;width:1px;height:5px;background:#555"></div><div class="a" style="left:881.8px;top:11px;width:1px;height:3px;background:#555"></div><div class="a" style="left:900.8px;top:11px;width:1px;height:3px;background:#555"></div><div class="a" style="left:910.2px;top:10px;width:1px;height:5px;background:#555"></div><div class="a" style="left:919.7px;top:11px;width:1px;height:3px;background:#555"></div><div class="a" style="left:938.5px;top:11px;width:1px;height:3px;background:#555"></div><div class="a" style="left:948.0px;top:10px;width:1px;height:5px;background:#555"></div><div class="a" style="left:957.4px;top:11px;width:1px;height:3px;background:#555"></div>
<div class="a" style="left:334px;top:21px;width:1px;height:3px;background:#555"></div>
<div class="a" style="left:381px;top:21px;width:1px;height:3px;background:#555"></div>
<div class="a" style="left:429px;top:21px;width:1px;height:3px;background:#555"></div>
<div class="a" style="left:476px;top:21px;width:1px;height:3px;background:#555"></div>
<div class="a" style="left:523px;top:21px;width:1px;height:3px;background:#555"></div>
<div class="a" style="left:570px;top:21px;width:1px;height:3px;background:#555"></div>
<div class="a" style="left:618px;top:21px;width:1px;height:3px;background:#555"></div>
<div class="a" style="left:665px;top:21px;width:1px;height:3px;background:#555"></div>
<div class="a" style="left:712px;top:21px;width:1px;height:3px;background:#555"></div>
<div class="a" style="left:759px;top:21px;width:1px;height:3px;background:#555"></div>
<div class="a" style="left:807px;top:21px;width:1px;height:3px;background:#555"></div>
<div class="a" style="left:854px;top:21px;width:1px;height:3px;background:#555"></div>
<div class="a" style="left:901px;top:21px;width:1px;height:3px;background:#555"></div>
<svg style="left:282px;top:3px" width="11" height="23" viewBox="0 0 11 23" fill="#fff" stroke="#333" stroke-width="1"><path d="M0.5 0.5 H10.5 L5.5 9.5 Z"/><path d="M5.5 9.5 L10.5 16.5 H0.5 Z"/><rect x="0.5" y="16.5" width="10" height="6"/></svg>
<svg style="left:905px;top:10px" width="12" height="10" viewBox="0 0 12 10" fill="#fff" stroke="#333" stroke-width="1"><path d="M6 0.5 L11.5 7 V9.5 H0.5 V7 Z"/></svg>
<div class="a" style="left:3px;top:51px;width:13px;height:755px;background:#fff;border-left:1px solid #d8d8d8;border-right:1px solid #d8d8d8"></div>
<div class="a" style="left:3px;top:51px;width:13px;height:76px;background:#d4d4d4"></div>
<div class="a" style="left:8px;top:59.9px;width:2px;height:1px;background:#555"></div><div class="a" style="left:6px;top:69.3px;width:6px;height:1px;background:#555"></div><div class="a" style="left:8px;top:78.8px;width:2px;height:1px;background:#555"></div><div class="a" style="left:4px;top:82.7px;width:12px;height:12px;font-size:9px;line-height:12px;color:#555;text-align:center;transform:rotate(-90deg)">1</div><div class="a" style="left:8px;top:97.7px;width:2px;height:1px;background:#555"></div><div class="a" style="left:6px;top:107.1px;width:6px;height:1px;background:#555"></div><div class="a" style="left:8px;top:116.6px;width:2px;height:1px;background:#555"></div><div class="a" style="left:8px;top:135.4px;width:2px;height:1px;background:#555"></div><div class="a" style="left:6px;top:144.9px;width:6px;height:1px;background:#555"></div><div class="a" style="left:8px;top:154.4px;width:2px;height:1px;background:#555"></div><div class="a" style="left:4px;top:158.3px;width:12px;height:12px;font-size:9px;line-height:12px;color:#555;text-align:center;transform:rotate(-90deg)">1</div><div class="a" style="left:8px;top:173.2px;width:2px;height:1px;background:#555"></div><div class="a" style="left:6px;top:182.7px;width:6px;height:1px;background:#555"></div><div class="a" style="left:8px;top:192.1px;width:2px;height:1px;background:#555"></div><div class="a" style="left:4px;top:196.1px;width:12px;height:12px;font-size:9px;line-height:12px;color:#555;text-align:center;transform:rotate(-90deg)">2</div><div class="a" style="left:8px;top:211.1px;width:2px;height:1px;background:#555"></div><div class="a" style="left:6px;top:220.5px;width:6px;height:1px;background:#555"></div><div class="a" style="left:8px;top:229.9px;width:2px;height:1px;background:#555"></div><div class="a" style="left:4px;top:233.9px;width:12px;height:12px;font-size:9px;line-height:12px;color:#555;text-align:center;transform:rotate(-90deg)">3</div><div class="a" style="left:8px;top:248.9px;width:2px;height:1px;background:#555"></div><div class="a" style="left:6px;top:258.3px;width:6px;height:1px;background:#555"></div><div class="a" style="left:8px;top:267.8px;width:2px;height:1px;background:#555"></div><div class="a" style="left:4px;top:271.7px;width:12px;height:12px;font-size:9px;line-height:12px;color:#555;text-align:center;transform:rotate(-90deg)">4</div><div class="a" style="left:8px;top:286.6px;width:2px;height:1px;background:#555"></div><div class="a" style="left:6px;top:296.1px;width:6px;height:1px;background:#555"></div><div class="a" style="left:8px;top:305.5px;width:2px;height:1px;background:#555"></div><div class="a" style="left:4px;top:309.5px;width:12px;height:12px;font-size:9px;line-height:12px;color:#555;text-align:center;transform:rotate(-90deg)">5</div><div class="a" style="left:8px;top:324.4px;width:2px;height:1px;background:#555"></div><div class="a" style="left:6px;top:333.9px;width:6px;height:1px;background:#555"></div><div class="a" style="left:8px;top:343.4px;width:2px;height:1px;background:#555"></div><div class="a" style="left:4px;top:347.3px;width:12px;height:12px;font-size:9px;line-height:12px;color:#555;text-align:center;transform:rotate(-90deg)">6</div><div class="a" style="left:8px;top:362.2px;width:2px;height:1px;background:#555"></div><div class="a" style="left:6px;top:371.7px;width:6px;height:1px;background:#555"></div><div class="a" style="left:8px;top:381.1px;width:2px;height:1px;background:#555"></div><div class="a" style="left:4px;top:385.1px;width:12px;height:12px;font-size:9px;line-height:12px;color:#555;text-align:center;transform:rotate(-90deg)">7</div><div class="a" style="left:8px;top:400.0px;width:2px;height:1px;background:#555"></div><div class="a" style="left:6px;top:409.5px;width:6px;height:1px;background:#555"></div><div class="a" style="left:8px;top:419.0px;width:2px;height:1px;background:#555"></div><div class="a" style="left:4px;top:422.9px;width:12px;height:12px;font-size:9px;line-height:12px;color:#555;text-align:center;transform:rotate(-90deg)">8</div><div class="a" style="left:8px;top:437.8px;width:2px;height:1px;background:#555"></div><div class="a" style="left:6px;top:447.3px;width:6px;height:1px;background:#555"></div><div class="a" style="left:8px;top:456.8px;width:2px;height:1px;background:#555"></div><div class="a" style="left:4px;top:460.7px;width:12px;height:12px;font-size:9px;line-height:12px;color:#555;text-align:center;transform:rotate(-90deg)">9</div><div class="a" style="left:8px;top:475.6px;width:2px;height:1px;background:#555"></div><div class="a" style="left:6px;top:485.1px;width:6px;height:1px;background:#555"></div><div class="a" style="left:8px;top:494.5px;width:2px;height:1px;background:#555"></div><div class="a" style="left:4px;top:498.5px;width:12px;height:12px;font-size:9px;line-height:12px;color:#555;text-align:center;transform:rotate(-90deg)">10</div><div class="a" style="left:8px;top:513.5px;width:2px;height:1px;background:#555"></div><div class="a" style="left:6px;top:522.9px;width:6px;height:1px;background:#555"></div><div class="a" style="left:8px;top:532.3px;width:2px;height:1px;background:#555"></div><div class="a" style="left:4px;top:536.3px;width:12px;height:12px;font-size:9px;line-height:12px;color:#555;text-align:center;transform:rotate(-90deg)">11</div><div class="a" style="left:8px;top:551.2px;width:2px;height:1px;background:#555"></div><div class="a" style="left:6px;top:560.7px;width:6px;height:1px;background:#555"></div><div class="a" style="left:8px;top:570.1px;width:2px;height:1px;background:#555"></div><div class="a" style="left:4px;top:574.1px;width:12px;height:12px;font-size:9px;line-height:12px;color:#555;text-align:center;transform:rotate(-90deg)">12</div><div class="a" style="left:8px;top:589.0px;width:2px;height:1px;background:#555"></div><div class="a" style="left:6px;top:598.5px;width:6px;height:1px;background:#555"></div><div class="a" style="left:8px;top:608.0px;width:2px;height:1px;background:#555"></div><div class="a" style="left:4px;top:611.9px;width:12px;height:12px;font-size:9px;line-height:12px;color:#555;text-align:center;transform:rotate(-90deg)">13</div><div class="a" style="left:8px;top:626.8px;width:2px;height:1px;background:#555"></div><div class="a" style="left:6px;top:636.3px;width:6px;height:1px;background:#555"></div><div class="a" style="left:8px;top:645.8px;width:2px;height:1px;background:#555"></div><div class="a" style="left:4px;top:649.7px;width:12px;height:12px;font-size:9px;line-height:12px;color:#555;text-align:center;transform:rotate(-90deg)">14</div><div class="a" style="left:8px;top:664.6px;width:2px;height:1px;background:#555"></div><div class="a" style="left:6px;top:674.1px;width:6px;height:1px;background:#555"></div><div class="a" style="left:8px;top:683.5px;width:2px;height:1px;background:#555"></div><div class="a" style="left:4px;top:687.5px;width:12px;height:12px;font-size:9px;line-height:12px;color:#555;text-align:center;transform:rotate(-90deg)">15</div><div class="a" style="left:8px;top:702.4px;width:2px;height:1px;background:#555"></div><div class="a" style="left:6px;top:711.9px;width:6px;height:1px;background:#555"></div><div class="a" style="left:8px;top:721.3px;width:2px;height:1px;background:#555"></div><div class="a" style="left:4px;top:725.3px;width:12px;height:12px;font-size:9px;line-height:12px;color:#555;text-align:center;transform:rotate(-90deg)">16</div><div class="a" style="left:8px;top:740.2px;width:2px;height:1px;background:#555"></div><div class="a" style="left:6px;top:749.7px;width:6px;height:1px;background:#555"></div><div class="a" style="left:8px;top:759.1px;width:2px;height:1px;background:#555"></div><div class="a" style="left:4px;top:763.1px;width:12px;height:12px;font-size:9px;line-height:12px;color:#555;text-align:center;transform:rotate(-90deg)">17</div><div class="a" style="left:8px;top:778.0px;width:2px;height:1px;background:#555"></div><div class="a" style="left:6px;top:787.5px;width:6px;height:1px;background:#555"></div><div class="a" style="left:8px;top:796.9px;width:2px;height:1px;background:#555"></div><div class="a" style="left:4px;top:800.9px;width:12px;height:12px;font-size:9px;line-height:12px;color:#555;text-align:center;transform:rotate(-90deg)">18</div>
<div class="a" style="left:1124px;top:2px;width:12px;height:12px;background:#f7f7f7;border:1px solid #d8d8d8"></div>
<svg style="left:1126px;top:5px" width="8" height="5" viewBox="0 0 8 5"><path d="M0 5 L4 0.5 L8 5 Z" fill="#aaa"/></svg>
<div class="a" style="left:1124px;top:125px;width:12px;height:76px;background:#f7f7f7;border:1px solid #d0d0d0;border-radius:1px"></div>
<div class="a" style="left:1127px;top:158px;width:6px;height:1px;background:#cfcfcf"></div>
<div class="a" style="left:1127px;top:160px;width:6px;height:1px;background:#cfcfcf"></div>
<div class="a" style="left:1127px;top:162px;width:6px;height:1px;background:#cfcfcf"></div>
<div class="a" style="left:1127px;top:164px;width:6px;height:1px;background:#cfcfcf"></div>
<div class="a" style="left:1127px;top:166px;width:6px;height:1px;background:#cfcfcf"></div>
<div class="a" style="left:1124px;top:792px;width:12px;height:12px;background:#f7f7f7;border:1px solid #d8d8d8"></div>
<svg style="left:1126px;top:796px" width="8" height="5" viewBox="0 0 8 5"><path d="M0 0 L4 4.5 L8 0 Z" fill="#aaa"/></svg>
<div class="a" style="left:288px;top:128px;white-space:nowrap;line-height:32px"><span style="font-size:23.5px;color:#333;font-weight:bold">1.</span><span style="font-size:23.5px;color:#3a3a3a;font-weight:bold"> 收集联系人信息</span></div>
<div class="a" style="left:287px;top:188px;white-space:nowrap;font-size:16px;line-height:22px;color:#333">想象一下，您的公司中有一个自定义表单，员工需要在其中输入自己的电子邮件。此外</div>
<div class="a" style="left:287px;top:213px;white-space:nowrap;font-size:16px;line-height:22px;color:#333">公司还有自己的邮件域。</div>
<div class="a" style="left:307px;top:283px;width:74px;height:26px;background:#d5e0f1"></div>
<div class="a" style="left:307px;top:259px;width:73px;height:25px;background:#d8d98a"></div>
<div class="a" style="left:287px;top:263px;white-space:nowrap;font-size:16px;line-height:22px;color:#333">在 <span style="display:inline-block;width:72px;letter-spacing:0.35px;color:#444">onlyoffice</span> 表单中，您可添加邮件字段，让员工来输入完整的电子邮件地址：</div>
<div class="a" style="left:287px;top:658px;white-space:nowrap;font-size:16px;line-height:22px;color:#333">此时他们可能会在输入时出现拼写错误，导致您不得不去与个别人直接联系。</div>
<div class="a" style="left:287px;top:708px;white-space:nowrap;font-size:16px;line-height:22px;color:#333">对于此类情形，更好的办法就是使用包含以下元素的复杂字段：</div>
<div class="a" style="left:311px;top:764px;width:5px;height:5px;background:#222;border-radius:50%"></div>
<div class="a" style="left:334px;top:757px;white-space:nowrap;font-size:16px;line-height:22px;color:#333">用户名文本框</div>
<div class="a" style="left:311px;top:789px;width:5px;height:5px;background:#222;border-radius:50%"></div>
<div class="a" style="left:334px;top:782px;white-space:nowrap;font-size:16px;line-height:22px;color:#333">不可编辑的文本（包含公司邮件域）</div>
<div class="a" style="left:287px;top:308px;width:624px;height:321px;background:#f1f1f1"></div>
<div class="a" style="left:287px;top:308px;width:624px;height:21px;background:#ededed"></div>
<svg style="left:298px;top:314px" width="10" height="9" viewBox="0 0 17 15"><path d="M8.5 0.5 L16.5 4 L8.5 7.5 L0.5 4 Z" fill="#444"/><path d="M2.2 6.4 L8.5 9.2 L14.8 6.4 L16.5 7.2 L8.5 10.8 L0.5 7.2 Z" fill="#444"/><path d="M2.2 9.6 L8.5 12.4 L14.8 9.6 L16.5 10.4 L8.5 14 L0.5 10.4 Z" fill="#444"/></svg>
<div class="a" style="left:309px;top:314px;white-space:nowrap;font-size:8px;line-height:10px;font-weight:bold;color:#333;letter-spacing:-0.2px">ONLYOFFICE</div>
<div class="a" style="left:365px;top:308px;width:93px;height:21px;background:#446995"></div>
<div class="a" style="left:373px;top:315px;width:7px;height:1px;background:#fff"></div>
<div class="a" style="left:373px;top:317px;width:7px;height:1px;background:#fff"></div>
<div class="a" style="left:373px;top:319px;width:7px;height:1px;background:#fff"></div>
<div class="a" style="left:385px;top:315px;white-space:nowrap;font-size:8px;line-height:10px;color:#fff">文档2.docxf*</div>
<svg style="left:446px;top:314px" width="7" height="7" viewBox="0 0 7 7" stroke="#fff" stroke-width="1"><path d="M0.5 0.5 L6.5 6.5 M6.5 0.5 L0.5 6.5"/></svg>
<div class="a" style="left:289px;top:329px;width:622px;height:37px;background:#446995"></div>
<svg style="left:297px;top:333px" width="10" height="10" viewBox="0 0 14 13" fill="none" stroke="#fff" stroke-opacity="0.8" stroke-width="1.3"><path d="M0.5 0.5 H10.5 L13.5 3.5 V12.5 H0.5 Z"/><path d="M3.5 0.5 V4.5 H9.5 V0.5"/><path d="M3.5 12.5 V7.5 H10.5 V12.5"/></svg>
<svg style="left:324px;top:333px" width="11" height="10" viewBox="0 0 16 14" fill="none" stroke="#fff" stroke-width="1.5"><path d="M3.5 4 V0.6 H12.5 V4"/><rect x="0.6" y="4" width="14.8" height="6.5" rx="1.5"/><rect x="3.5" y="8" width="9" height="5.4" fill="#446995"/></svg>
<svg style="left:351px;top:335px" width="11" height="7" viewBox="0 0 16 10"><path d="M1 1 V7 H7 L4.8 4.8 C7.5 2.6 11.5 3 14.5 7.5 L15.5 7 C12.5 0.8 7.5 0.5 3.8 3.8 Z" fill="#fff"/></svg>
<svg style="left:380px;top:335px" width="11" height="7" viewBox="0 0 16 10"><path d="M15 1 V7 H9 L11.2 4.8 C8.5 2.6 4.5 3 1.5 7.5 L0.5 7 C3.5 0.8 8.5 0.5 12.2 3.8 Z" fill="#fff" opacity="0.45"/></svg>
<div class="a" style="left:666px;top:332px;white-space:nowrap;font-size:9px;line-height:11px;color:#fff">文档2.docxf</div>
<div class="a" style="left:297.0px;top:352px;white-space:nowrap;font-size:8px;line-height:10px;color:#fff">文件</div>
<div class="a" style="left:329.6px;top:352px;white-space:nowrap;font-size:8px;line-height:10px;color:#fff">主页</div>
<div class="a" style="left:362.20000000000005px;top:352px;white-space:nowrap;font-size:8px;line-height:10px;color:#fff">插入</div>
<div class="a" style="left:394.79999999999995px;top:352px;white-space:nowrap;font-size:8px;line-height:10px;color:#fff">布局</div>
<div class="a" style="left:427.4px;top:352px;white-space:nowrap;font-size:8px;line-height:10px;color:#fff">引用</div>
<div class="a" style="left:452px;top:348px;width:29px;height:18px;background:#f1f1f1"></div>
<div class="a" style="left:460.0px;top:352px;white-space:nowrap;font-size:8px;line-height:10px;color:#333">表单</div>
<div class="a" style="left:492.6px;top:352px;white-space:nowrap;font-size:8px;line-height:10px;color:#fff">协作</div>
<div class="a" style="left:525.2px;top:352px;white-space:nowrap;font-size:8px;line-height:10px;color:#fff">保护</div>
<div class="a" style="left:557.8px;top:352px;white-space:nowrap;font-size:8px;line-height:10px;color:#fff">视图</div>
<div class="a" style="left:590.4000000000001px;top:352px;white-space:nowrap;font-size:8px;line-height:10px;color:#fff">插件</div>
<div class="a" style="left:289px;top:412px;width:622px;height:1px;background:#d0d0d0"></div>
<svg style="left:297px;top:376px" width="10" height="10" viewBox="0 0 15 14" fill="none" stroke="#aaa" stroke-width="1.3"><path d="M0.5 10.5 V0.5 H9.5 V2.5"/><path d="M2.5 10.5 V2.5 H11.5 V4.5"/><rect x="4.5" y="4.5" width="10" height="9"/><path d="M6.5 7.5 H12.5 M6.5 9.5 H12.5 M6.5 11.5 H12.5"/></svg>
<svg style="left:317px;top:375px" width="11" height="10" viewBox="0 0 16 14" fill="none" stroke="#aaa" stroke-width="1.3"><circle cx="3" cy="3" r="2.3"/><circle cx="3" cy="11" r="2.3"/><path d="M4.8 4.5 L15.5 12.5 M4.8 9.5 L15.5 1.5"/></svg>
<svg style="left:297px;top:393px" width="10" height="11" viewBox="0 0 15 15" fill="none" stroke="#444" stroke-width="1.3"><path d="M2.5 12.5 H0.5 V2.5 H9.5 V4.5"/><rect x="3" y="0.8" width="4" height="2.5" fill="#444"/><rect x="4.5" y="5.5" width="10" height="9"/><path d="M6.5 8.5 H12.5 M6.5 10.5 H12.5 M6.5 12.5 H12.5"/></svg>
<svg style="left:317px;top:393px" width="10" height="11" viewBox="0 0 15 16" fill="none" stroke="#444" stroke-width="1.3"><path d="M0.5 0.5 H14.5 V8 M0.5 0.5 V13.5 H7" stroke-dasharray="2 1.5"/><path d="M8 6 L8 15 L10 13 L12 16 L13 15.5 L11.5 12.5 L14 12 Z" fill="#f1f1f1"/></svg>
<div class="a" style="left:336px;top:371px;width:1px;height:36px;background:#ddd"></div>
<svg style="left:351px;top:375px" width="17" height="14" viewBox="0 0 18 15" fill="none" stroke="#b0b0b0" stroke-width="1.1"><rect x="0.5" y="1.5" width="17" height="10"/><path d="M3.5 4 V9"/></svg>
<div class="a" style="left:339px;top:390px;white-space:nowrap;font-size:6.5px;line-height:8px;color:#c0c0c0"><div style="width:40px;text-align:center">文字字段</div></div>
<svg style="left:384px;top:375px" width="17" height="14" viewBox="0 0 18 15" fill="none" stroke="#b0b0b0" stroke-width="1.1"><rect x="0.5" y="0.5" width="12" height="13"/><rect x="10.5" y="0.5" width="6" height="5" fill="#f1f1f1"/><path d="M3 5 H9 M3 8 H9 M3 11 H9"/></svg>
<div class="a" style="left:372px;top:390px;white-space:nowrap;font-size:6.5px;line-height:8px;color:#c0c0c0"><div style="width:40px;text-align:center">组合框</div></div>
<svg style="left:418px;top:375px" width="17" height="14" viewBox="0 0 18 15" fill="none" stroke="#b0b0b0" stroke-width="1.1"><rect x="0.5" y="0.5" width="14" height="13"/><path d="M0.5 4 H14.5 M3 7 H12 M3 10 H12"/></svg>
<div class="a" style="left:406px;top:390px;white-space:nowrap;font-size:6.5px;line-height:8px;color:#c0c0c0"><div style="width:40px;text-align:center">候选列表</div></div>
<svg style="left:451px;top:375px" width="17" height="14" viewBox="0 0 18 15" fill="none" stroke="#b0b0b0" stroke-width="1.1"><rect x="0.5" y="0.5" width="13" height="13"/><path d="M3 7 L6 10 L11 4"/></svg>
<div class="a" style="left:439px;top:390px;white-space:nowrap;font-size:6.5px;line-height:8px;color:#c0c0c0"><div style="width:40px;text-align:center">多选框</div></div>
<svg style="left:480px;top:375px" width="17" height="14" viewBox="0 0 18 15" fill="none" stroke="#b0b0b0" stroke-width="1.1"><circle cx="7.5" cy="7.5" r="7"/><circle cx="7.5" cy="7.5" r="3" fill="#bbb"/></svg>
<div class="a" style="left:468px;top:390px;white-space:nowrap;font-size:6.5px;line-height:8px;color:#c0c0c0"><div style="width:40px;text-align:center">单选框</div></div>
<svg style="left:507px;top:375px" width="17" height="14" viewBox="0 0 18 15" fill="none" stroke="#b0b0b0" stroke-width="1.1"><rect x="0.5" y="0.5" width="13" height="13"/><path d="M0.5 11 L5 7 L8 9.5 L10 8 L13.5 11"/><circle cx="4" cy="4" r="1.2"/></svg>
<div class="a" style="left:495px;top:390px;white-space:nowrap;font-size:6.5px;line-height:8px;color:#c0c0c0"><div style="width:40px;text-align:center">图片</div></div>
<svg style="left:547px;top:375px" width="17" height="14" viewBox="0 0 18 15" fill="none" stroke="#b0b0b0" stroke-width="1.1"><circle cx="8" cy="7.5" r="7"/><circle cx="8" cy="7.5" r="3"/><path d="M11 5 V9 C11 11 14 11 15 8"/></svg>
<div class="a" style="left:535px;top:390px;white-space:nowrap;font-size:6.5px;line-height:8px;color:#c0c0c0"><div style="width:40px;text-align:center">Email地址</div></div>
<svg style="left:586px;top:375px" width="17" height="14" viewBox="0 0 18 15" fill="none" stroke="#b0b0b0" stroke-width="1.1"><path d="M2 1 L5 0.5 L6.5 4 L4.5 5.5 C5.5 8 7 9.5 9.5 10.5 L11 8.5 L14.5 10 L14 13 C8 14 1 7 2 1 Z"/></svg>
<div class="a" style="left:574px;top:390px;white-space:nowrap;font-size:6.5px;line-height:8px;color:#c0c0c0"><div style="width:40px;text-align:center">电话号码</div></div>
<svg style="left:623px;top:375px" width="17" height="14" viewBox="0 0 18 15" fill="none" stroke="#b0b0b0" stroke-width="1.1"><rect x="0.5" y="1.5" width="17" height="11"/><path d="M3.5 4 V10 M9 1.5 V12.5 M11.5 4 H15.5 V10 H11.5"/></svg>
<div class="a" style="left:611px;top:390px;white-space:nowrap;font-size:6.5px;line-height:8px;color:#c0c0c0"><div style="width:40px;text-align:center">复合字段</div></div>
<div class="a" style="left:536px;top:371px;width:1px;height:36px;background:#ddd"></div>
<div class="a" style="left:655px;top:371px;width:1px;height:36px;background:#ddd"></div>
<svg style="left:664px;top:375px" width="9" height="8" viewBox="0 0 13 12" fill="none" stroke="#444" stroke-width="1.4"><path d="M1 8 L8 1 L12 5 L5 12 H2.5 Z M4 5 L8 9"/></svg>
<div class="a" style="left:677px;top:374px;white-space:nowrap;font-size:7px;line-height:9px;color:#555">清除所有字段</div>
<svg style="left:664px;top:393px" width="9" height="9" viewBox="0 0 13 13" fill="none" stroke="#444" stroke-width="1.4"><path d="M1 12 L2 8.5 L9.5 1 L12 3.5 L4.5 11 Z"/></svg>
<div class="a" style="left:677px;top:393px;white-space:nowrap;font-size:7px;line-height:9px;color:#555">高亮设置 ⌄</div>
<svg style="left:745px;top:374px" width="14" height="13" viewBox="0 0 14 13" fill="none" stroke="#444" stroke-width="1.2"><path d="M1.5 6 V0.5 H12.5 V7.5 H6"/><path d="M9 10.5 H2 M4.5 8 L2 10.5 L4.5 13"/></svg>
<svg style="left:788px;top:374px" width="14" height="13" viewBox="0 0 14 13" fill="none" stroke="#444" stroke-width="1.2"><path d="M1.5 7.5 V0.5 H12.5 V6"/><path d="M5 10.5 H12 M9.5 8 L12 10.5 L9.5 13"/></svg>
<div class="a" style="left:727px;top:390px;white-space:nowrap;font-size:7px;line-height:9px;color:#555"><div style="width:50px;text-align:center">上一填充框</div></div>
<div class="a" style="left:770px;top:390px;white-space:nowrap;font-size:7px;line-height:9px;color:#555"><div style="width:50px;text-align:center">下一填充框</div></div>
<div class="a" style="left:821px;top:371px;width:1px;height:36px;background:#ddd"></div>
<div class="a" style="left:838px;top:374px;white-space:nowrap;line-height:11px"><svg width="16" height="11" viewBox="0 0 16 11" style="position:static"><ellipse cx="8" cy="5.5" rx="7.5" ry="4.5" fill="none" stroke="#333"/><circle cx="8" cy="5.5" r="2.2" fill="#333"/></svg></div>
<div class="a" style="left:826px;top:390px;white-space:nowrap;font-size:7px;line-height:9px;color:#555"><div style="width:40px;text-align:center">浏览表单</div></div>
<svg style="left:880px;top:372px" width="15" height="16" viewBox="0 0 15 16" fill="none" stroke="#444" stroke-width="1"><path d="M4.5 3.5 V0.5 H10.5 L14.5 4.5 V15.5 H4.5"/><path d="M3.5 3.5 H0.5 V12.5 H4.5"/><rect x="6.5" y="8.5" width="5" height="4"/></svg>
<div class="a" style="left:866px;top:390px;white-space:nowrap;font-size:7px;line-height:9px;color:#555"><div style="width:45px;text-align:center">下载为oform</div></div>
<div class="a" style="left:289px;top:413px;width:23px;height:216px;background:#f1f1f1;border-right:1px solid #d6d6d6"></div>
<svg style="left:297px;top:427px" width="9" height="9" viewBox="0 0 14 14" fill="none" stroke="#444" stroke-width="1.5"><circle cx="5.8" cy="5.8" r="5"/><path d="M9.5 9.5 L13.5 13.5"/></svg>
<svg style="left:296px;top:453px" width="11" height="11" viewBox="0 0 16 16" fill="none" stroke="#444" stroke-width="1.4"><path d="M0.5 0.5 H15.5 V11.5 H8 L5 14.5 V11.5 H0.5 Z"/><path d="M3 3.5 H13 M3 5.5 H13 M3 7.5 H9"/></svg>
<svg style="left:297px;top:480px" width="10" height="9" viewBox="0 0 14 12" fill="none" stroke="#444" stroke-width="1.4"><path d="M0.5 0.5 H9 M3 4 H13.5 M3 7.5 H11 M0.5 11.5 H9"/></svg>
<svg style="left:296px;top:505px" width="11" height="9" viewBox="0 0 16 13" fill="none" stroke="#444" stroke-width="1.4"><path d="M0.5 4.5 H4 L8.5 1 V12 L4 8.5 H0.5 Z"/><path d="M3 8.5 V12.5 H5"/><path d="M11 3.5 C12.5 5 12.5 8 11 9.5 M13 1.5 C15.5 4 15.5 9 13 11.5"/></svg>
<div class="a" style="left:312px;top:413px;width:599px;height:216px;background:#e2e2e2"></div>
<div class="a" style="left:316px;top:414px;width:13px;height:13px;background:#e8e8e8;border:1px solid #d8d8d8"></div>
<div class="a" style="left:320px;top:417px;white-space:nowrap;font-size:7px;line-height:7px;color:#000"><b>L</b></div>
<div class="a" style="left:345px;top:417px;width:539px;height:10px;background:#d4d4d4"></div>
<div class="a" style="left:421px;top:417px;width:424px;height:10px;background:#fff"></div>
<div class="a" style="left:350.6px;top:421px;width:1px;height:2px;background:#666"></div><div class="a" style="left:357.0px;top:420px;width:1px;height:4px;background:#666"></div><div class="a" style="left:363.4px;top:421px;width:1px;height:2px;background:#666"></div><div class="a" style="left:366.8px;top:417px;width:6px;font-size:6px;line-height:9px;color:#777;text-align:center">2</div><div class="a" style="left:376.2px;top:421px;width:1px;height:2px;background:#666"></div><div class="a" style="left:382.6px;top:420px;width:1px;height:4px;background:#666"></div><div class="a" style="left:389.0px;top:421px;width:1px;height:2px;background:#666"></div><div class="a" style="left:392.4px;top:417px;width:6px;font-size:6px;line-height:9px;color:#777;text-align:center">1</div><div class="a" style="left:401.8px;top:421px;width:1px;height:2px;background:#666"></div><div class="a" style="left:408.2px;top:420px;width:1px;height:4px;background:#666"></div><div class="a" style="left:414.6px;top:421px;width:1px;height:2px;background:#666"></div><div class="a" style="left:427.4px;top:421px;width:1px;height:2px;background:#666"></div><div class="a" style="left:433.8px;top:420px;width:1px;height:4px;background:#666"></div><div class="a" style="left:440.2px;top:421px;width:1px;height:2px;background:#666"></div><div class="a" style="left:443.6px;top:417px;width:6px;font-size:6px;line-height:9px;color:#777;text-align:center">1</div><div class="a" style="left:453.0px;top:421px;width:1px;height:2px;background:#666"></div><div class="a" style="left:459.4px;top:420px;width:1px;height:4px;background:#666"></div><div class="a" style="left:465.8px;top:421px;width:1px;height:2px;background:#666"></div><div class="a" style="left:469.2px;top:417px;width:6px;font-size:6px;line-height:9px;color:#777;text-align:center">2</div><div class="a" style="left:478.6px;top:421px;width:1px;height:2px;background:#666"></div><div class="a" style="left:485.0px;top:420px;width:1px;height:4px;background:#666"></div><div class="a" style="left:491.4px;top:421px;width:1px;height:2px;background:#666"></div><div class="a" style="left:494.8px;top:417px;width:6px;font-size:6px;line-height:9px;color:#777;text-align:center">3</div><div class="a" style="left:504.2px;top:421px;width:1px;height:2px;background:#666"></div><div class="a" style="left:510.6px;top:420px;width:1px;height:4px;background:#666"></div><div class="a" style="left:517.0px;top:421px;width:1px;height:2px;background:#666"></div><div class="a" style="left:520.4px;top:417px;width:6px;font-size:6px;line-height:9px;color:#777;text-align:center">4</div><div class="a" style="left:529.8px;top:421px;width:1px;height:2px;background:#666"></div><div class="a" style="left:536.2px;top:420px;width:1px;height:4px;background:#666"></div><div class="a" style="left:542.6px;top:421px;width:1px;height:2px;background:#666"></div><div class="a" style="left:546.0px;top:417px;width:6px;font-size:6px;line-height:9px;color:#777;text-align:center">5</div><div class="a" style="left:555.4px;top:421px;width:1px;height:2px;background:#666"></div><div class="a" style="left:561.8px;top:420px;width:1px;height:4px;background:#666"></div><div class="a" style="left:568.2px;top:421px;width:1px;height:2px;background:#666"></div><div class="a" style="left:571.6px;top:417px;width:6px;font-size:6px;line-height:9px;color:#777;text-align:center">6</div><div class="a" style="left:581.0px;top:421px;width:1px;height:2px;background:#666"></div><div class="a" style="left:587.4px;top:420px;width:1px;height:4px;background:#666"></div><div class="a" style="left:593.8px;top:421px;width:1px;height:2px;background:#666"></div><div class="a" style="left:597.2px;top:417px;width:6px;font-size:6px;line-height:9px;color:#777;text-align:center">7</div><div class="a" style="left:606.6px;top:421px;width:1px;height:2px;background:#666"></div><div class="a" style="left:613.0px;top:420px;width:1px;height:4px;background:#666"></div><div class="a" style="left:619.4px;top:421px;width:1px;height:2px;background:#666"></div><div class="a" style="left:622.8px;top:417px;width:6px;font-size:6px;line-height:9px;color:#777;text-align:center">8</div><div class="a" style="left:632.2px;top:421px;width:1px;height:2px;background:#666"></div><div class="a" style="left:638.6px;top:420px;width:1px;height:4px;background:#666"></div><div class="a" style="left:645.0px;top:421px;width:1px;height:2px;background:#666"></div><div class="a" style="left:648.4px;top:417px;width:6px;font-size:6px;line-height:9px;color:#777;text-align:center">9</div><div class="a" style="left:657.8px;top:421px;width:1px;height:2px;background:#666"></div><div class="a" style="left:664.2px;top:420px;width:1px;height:4px;background:#666"></div><div class="a" style="left:670.6px;top:421px;width:1px;height:2px;background:#666"></div><div class="a" style="left:674.0px;top:417px;width:6px;font-size:6px;line-height:9px;color:#777;text-align:center">10</div><div class="a" style="left:683.4px;top:421px;width:1px;height:2px;background:#666"></div><div class="a" style="left:689.8px;top:420px;width:1px;height:4px;background:#666"></div><div class="a" style="left:696.2px;top:421px;width:1px;height:2px;background:#666"></div><div class="a" style="left:699.6px;top:417px;width:6px;font-size:6px;line-height:9px;color:#777;text-align:center">11</div><div class="a" style="left:709.0px;top:421px;width:1px;height:2px;background:#666"></div><div class="a" style="left:715.4px;top:420px;width:1px;height:4px;background:#666"></div><div class="a" style="left:721.8px;top:421px;width:1px;height:2px;background:#666"></div><div class="a" style="left:725.2px;top:417px;width:6px;font-size:6px;line-height:9px;color:#777;text-align:center">12</div><div class="a" style="left:734.6px;top:421px;width:1px;height:2px;background:#666"></div><div class="a" style="left:741.0px;top:420px;width:1px;height:4px;background:#666"></div><div class="a" style="left:747.4px;top:421px;width:1px;height:2px;background:#666"></div><div class="a" style="left:750.8px;top:417px;width:6px;font-size:6px;line-height:9px;color:#777;text-align:center">13</div><div class="a" style="left:760.2px;top:421px;width:1px;height:2px;background:#666"></div><div class="a" style="left:766.6px;top:420px;width:1px;height:4px;background:#666"></div><div class="a" style="left:773.0px;top:421px;width:1px;height:2px;background:#666"></div><div class="a" style="left:776.4px;top:417px;width:6px;font-size:6px;line-height:9px;color:#777;text-align:center">14</div><div class="a" style="left:785.8px;top:421px;width:1px;height:2px;background:#666"></div><div class="a" style="left:792.2px;top:420px;width:1px;height:4px;background:#666"></div><div class="a" style="left:798.6px;top:421px;width:1px;height:2px;background:#666"></div><div class="a" style="left:802.0px;top:417px;width:6px;font-size:6px;line-height:9px;color:#777;text-align:center">15</div><div class="a" style="left:811.4px;top:421px;width:1px;height:2px;background:#666"></div><div class="a" style="left:817.8px;top:420px;width:1px;height:4px;background:#666"></div><div class="a" style="left:824.2px;top:421px;width:1px;height:2px;background:#666"></div><div class="a" style="left:827.6px;top:417px;width:6px;font-size:6px;line-height:9px;color:#777;text-align:center">16</div><div class="a" style="left:837.0px;top:421px;width:1px;height:2px;background:#666"></div><div class="a" style="left:843.4px;top:420px;width:1px;height:4px;background:#666"></div><div class="a" style="left:849.8px;top:421px;width:1px;height:2px;background:#666"></div><div class="a" style="left:853.2px;top:417px;width:6px;font-size:6px;line-height:9px;color:#777;text-align:center">17</div><div class="a" style="left:862.6px;top:421px;width:1px;height:2px;background:#666"></div><div class="a" style="left:869.0px;top:420px;width:1px;height:4px;background:#666"></div><div class="a" style="left:875.4px;top:421px;width:1px;height:2px;background:#666"></div>
<div class="a" style="left:453px;top:427px;width:1px;height:2px;background:#666"></div>
<div class="a" style="left:485px;top:427px;width:1px;height:2px;background:#666"></div>
<div class="a" style="left:517px;top:427px;width:1px;height:2px;background:#666"></div>
<div class="a" style="left:549px;top:427px;width:1px;height:2px;background:#666"></div>
<div class="a" style="left:581px;top:427px;width:1px;height:2px;background:#666"></div>
<div class="a" style="left:613px;top:427px;width:1px;height:2px;background:#666"></div>
<div class="a" style="left:645px;top:427px;width:1px;height:2px;background:#666"></div>
<div class="a" style="left:677px;top:427px;width:1px;height:2px;background:#666"></div>
<div class="a" style="left:709px;top:427px;width:1px;height:2px;background:#666"></div>
<div class="a" style="left:741px;top:427px;width:1px;height:2px;background:#666"></div>
<div class="a" style="left:773px;top:427px;width:1px;height:2px;background:#666"></div>
<div class="a" style="left:805px;top:427px;width:1px;height:2px;background:#666"></div>
<div class="a" style="left:837px;top:427px;width:1px;height:2px;background:#666"></div>
<svg style="left:417px;top:413px" width="8" height="16" viewBox="0 0 8 16" fill="#fff" stroke="#333" stroke-width="0.8"><path d="M0.5 0.5 H7.5 L4 6.5 Z"/><path d="M4 6.5 L7.5 11 H0.5 Z"/><rect x="0.5" y="11" width="7" height="4.5"/></svg>
<svg style="left:469px;top:419px" width="5" height="5" viewBox="0 0 5 5"><path d="M0 0 H1.5 V3.5 H5 V5 H0 Z" fill="#000"/></svg>
<svg style="left:842px;top:418px" width="8" height="7" viewBox="0 0 8 7" fill="#fff" stroke="#333" stroke-width="0.8"><path d="M4 0.5 L7.5 5 V6.5 H0.5 V5 Z"/></svg>
<div class="a" style="left:319px;top:445px;width:8px;height:184px;background:#fff;border-left:1px solid #ddd;border-right:1px solid #ddd"></div>
<div class="a" style="left:319px;top:445px;width:8px;height:50px;background:#d4d4d4"></div>
<div class="a" style="left:322px;top:450.2px;width:2px;height:1px;background:#666"></div><div class="a" style="left:321px;top:456.6px;width:4px;height:1px;background:#666"></div><div class="a" style="left:322px;top:463.0px;width:2px;height:1px;background:#666"></div><div class="a" style="left:319px;top:465.4px;width:8px;height:8px;font-size:6px;line-height:8px;color:#777;text-align:center;transform:rotate(-90deg)">1</div><div class="a" style="left:322px;top:475.8px;width:2px;height:1px;background:#666"></div><div class="a" style="left:321px;top:482.2px;width:4px;height:1px;background:#666"></div><div class="a" style="left:322px;top:488.6px;width:2px;height:1px;background:#666"></div><div class="a" style="left:322px;top:501.4px;width:2px;height:1px;background:#666"></div><div class="a" style="left:321px;top:507.8px;width:4px;height:1px;background:#666"></div><div class="a" style="left:322px;top:514.2px;width:2px;height:1px;background:#666"></div><div class="a" style="left:319px;top:516.6px;width:8px;height:8px;font-size:6px;line-height:8px;color:#777;text-align:center;transform:rotate(-90deg)">1</div><div class="a" style="left:322px;top:527.0px;width:2px;height:1px;background:#666"></div><div class="a" style="left:321px;top:533.4px;width:4px;height:1px;background:#666"></div><div class="a" style="left:322px;top:539.8px;width:2px;height:1px;background:#666"></div><div class="a" style="left:319px;top:542.2px;width:8px;height:8px;font-size:6px;line-height:8px;color:#777;text-align:center;transform:rotate(-90deg)">2</div><div class="a" style="left:322px;top:552.6px;width:2px;height:1px;background:#666"></div><div class="a" style="left:321px;top:559.0px;width:4px;height:1px;background:#666"></div><div class="a" style="left:322px;top:565.4px;width:2px;height:1px;background:#666"></div><div class="a" style="left:319px;top:567.8px;width:8px;height:8px;font-size:6px;line-height:8px;color:#777;text-align:center;transform:rotate(-90deg)">3</div><div class="a" style="left:322px;top:578.2px;width:2px;height:1px;background:#666"></div><div class="a" style="left:321px;top:584.6px;width:4px;height:1px;background:#666"></div><div class="a" style="left:322px;top:591.0px;width:2px;height:1px;background:#666"></div><div class="a" style="left:319px;top:593.4px;width:8px;height:8px;font-size:6px;line-height:8px;color:#777;text-align:center;transform:rotate(-90deg)">4</div><div class="a" style="left:322px;top:603.8px;width:2px;height:1px;background:#666"></div><div class="a" style="left:321px;top:610.2px;width:4px;height:1px;background:#666"></div><div class="a" style="left:322px;top:616.6px;width:2px;height:1px;background:#666"></div><div class="a" style="left:319px;top:619.0px;width:8px;height:8px;font-size:6px;line-height:8px;color:#777;text-align:center;transform:rotate(-90deg)">5</div>
<div class="a" style="left:343px;top:443px;width:543px;height:186px;background:#fff;border:1px solid #ccc;border-bottom:none"></div>
<div class="a" style="left:900px;top:413px;width:11px;height:216px;background:#f1f1f1;border-left:1px solid #ddd"></div>
<div class="a" style="left:422px;top:494px;white-space:nowrap;font-size:21.5px;line-height:28px;color:#111;font-family:'Liberation Serif',serif"><b>联系信息</b></div>
<div class="a" style="left:422px;top:532px;white-space:nowrap;font-size:14px;line-height:20px;color:#222;font-family:'Liberation Serif',serif">姓名：</div>
<div class="a" style="left:465px;top:533px;width:88px;height:17px;background:#e1dffa"></div>
<div class="a" style="left:465px;top:532px;white-space:nowrap;font-size:14px;line-height:20px;color:#8e8eb8;font-family:'Liberation Serif',serif">在此输入文字</div>
<div class="a" style="left:422px;top:560px;white-space:nowrap;font-size:14px;line-height:20px;color:#222;font-family:'Liberation Serif',serif">公司：</div>
<div class="a" style="left:465px;top:561px;width:88px;height:17px;background:#e1dffa"></div>
<div class="a" style="left:465px;top:560px;white-space:nowrap;font-size:14px;line-height:20px;color:#8e8eb8;font-family:'Liberation Serif',serif">在此输入文字</div>
<div class="a" style="left:422px;top:589px;white-space:nowrap;font-size:14px;line-height:20px;color:#222;font-family:'Liberation Serif',serif">电子邮箱:</div>
<div class="a" style="left:485px;top:589px;width:163px;height:20px;background:#fff;border:1px solid #bbb"></div>
<div class="a" style="left:493px;top:590px;white-space:nowrap;font-size:14.3px;line-height:19px;color:#999">user_name@email.com</div>
</div>
</body></html>
